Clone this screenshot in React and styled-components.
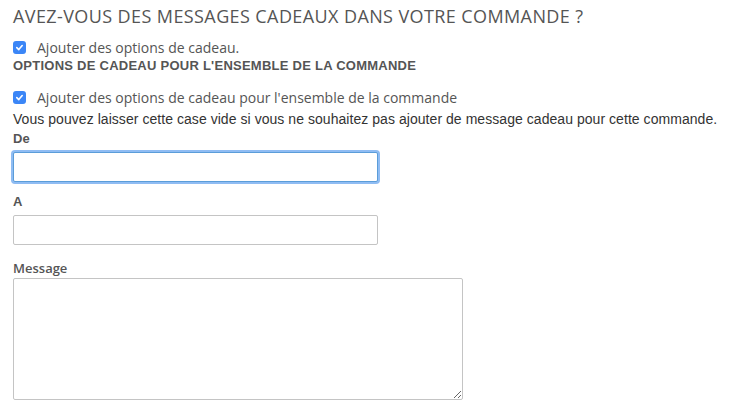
import styled, { createGlobalStyle } from 'styled-components';

const GlobalStyle = createGlobalStyle`
  html, body {
    margin: 0;
    padding: 0;
    background: #fff;
  }
  body {
    font-family: "Open Sans", "Liberation Sans", Arial, sans-serif;
    color: #555;
  }
`;

const Section = styled.div`
  padding: 4px 13px 0;
  width: 742px;
  box-sizing: border-box;
`;

const Title = styled.h3`
  margin: 0 0 10px;
  font-family: "Open Sans", sans-serif;
  font-weight: 400;
  font-size: 18px;
  line-height: 24px;
  color: #555;
  letter-spacing: 0.4px;
`;

const CheckRow = styled.label`
  display: flex;
  align-items: center;
  gap: 11px;
  height: ${({ $h }) => $h || 20}px;
  font-family: "Open Sans", sans-serif;
  font-size: 14px;
  color: #555;
`;

const Box = styled.span`
  width: 13px;
  height: 13px;
  border-radius: 3px;
  background: #3b86f7;
  display: inline-flex;
  align-items: center;
  justify-content: center;
  flex: none;
`;

const SubTitle = styled.h4`
  margin: 0 0 ${({ $gap }) => $gap || 0}px;
  font-family: "Liberation Sans", Arial, sans-serif;
  font-weight: 700;
  font-size: 13px;
  line-height: 20px;
  letter-spacing: 0.25px;
  color: #555;
`;

const Note = styled.p`
  margin: 2px 0 0;
  font-family: "Liberation Sans", Arial, sans-serif;
  font-size: 14px;
  line-height: 20px;
  letter-spacing: 0.05px;
  color: #333;
`;

const Field = styled.div`
  display: flex;
  flex-direction: column;
  margin-bottom: ${({ $mb }) => $mb || 0}px;
`;

const Label = styled.label`
  font-family: ${({ $sans }) => ($sans ? '"Open Sans", sans-serif' : '"Liberation Sans", Arial, sans-serif')};
  font-weight: ${({ $sans }) => ($sans ? 600 : 700)};
  font-size: 13px;
  line-height: 20px;
  color: #555;
  margin-bottom: ${({ $mb }) => $mb || 0}px;
`;

const Input = styled.input`
  width: 365px;
  height: 30px;
  box-sizing: border-box;
  border: 1px solid ${({ $focus }) => ($focus ? '#5b9dd9' : '#c4c4c4')};
  border-radius: 2px;
  outline: none;
  box-shadow: ${({ $focus }) => ($focus ? '0 0 0 2px #8fbcf3' : 'none')};
  padding: 4px 6px;
  font-size: 14px;
  background: #fff;
`;

const TextArea = styled.textarea`
  width: 450px;
  height: 122px;
  box-sizing: border-box;
  border: 1px solid #c4c4c4;
  border-radius: 2px;
  padding: 4px 6px;
  resize: both;
  font-size: 14px;
  outline: none;
`;

const Check = () => (
  <Box>
    <svg width="9" height="9" viewBox="0 0 10 10">
      <path d="M2 5.2 L4.2 7.3 L8 2.8" fill="none" stroke="#fff" strokeWidth="1.8" strokeLinecap="round" strokeLinejoin="round" />
    </svg>
  </Box>
);

export default function App() {
  return (
    <>
      <GlobalStyle />
      <Section>
        <Title>AVEZ-VOUS DES MESSAGES CADEAUX DANS VOTRE COMMANDE ?</Title>
        <CheckRow $h={18}>
          <Check />
          Ajouter des options de cadeau.
        </CheckRow>
        <SubTitle $gap={11}>OPTIONS DE CADEAU POUR L'ENSEMBLE DE LA COMMANDE</SubTitle>
        <CheckRow>
          <Check />
          Ajouter des options de cadeau pour l'ensemble de la commande
        </CheckRow>
        <Note>Vous pouvez laisser cette case vide si vous ne souhaitez pas ajouter de message cadeau pour cette commande.</Note>
        <Field $mb={10}>
          <Label $mb={3}>De</Label>
          <Input $focus />
        </Field>
        <Field $mb={13}>
          <Label $mb={3}>A</Label>
          <Input />
        </Field>
        <Field>
          <Label $sans>Message</Label>
          <TextArea />
        </Field>
      </Section>
    </>
  );
}
